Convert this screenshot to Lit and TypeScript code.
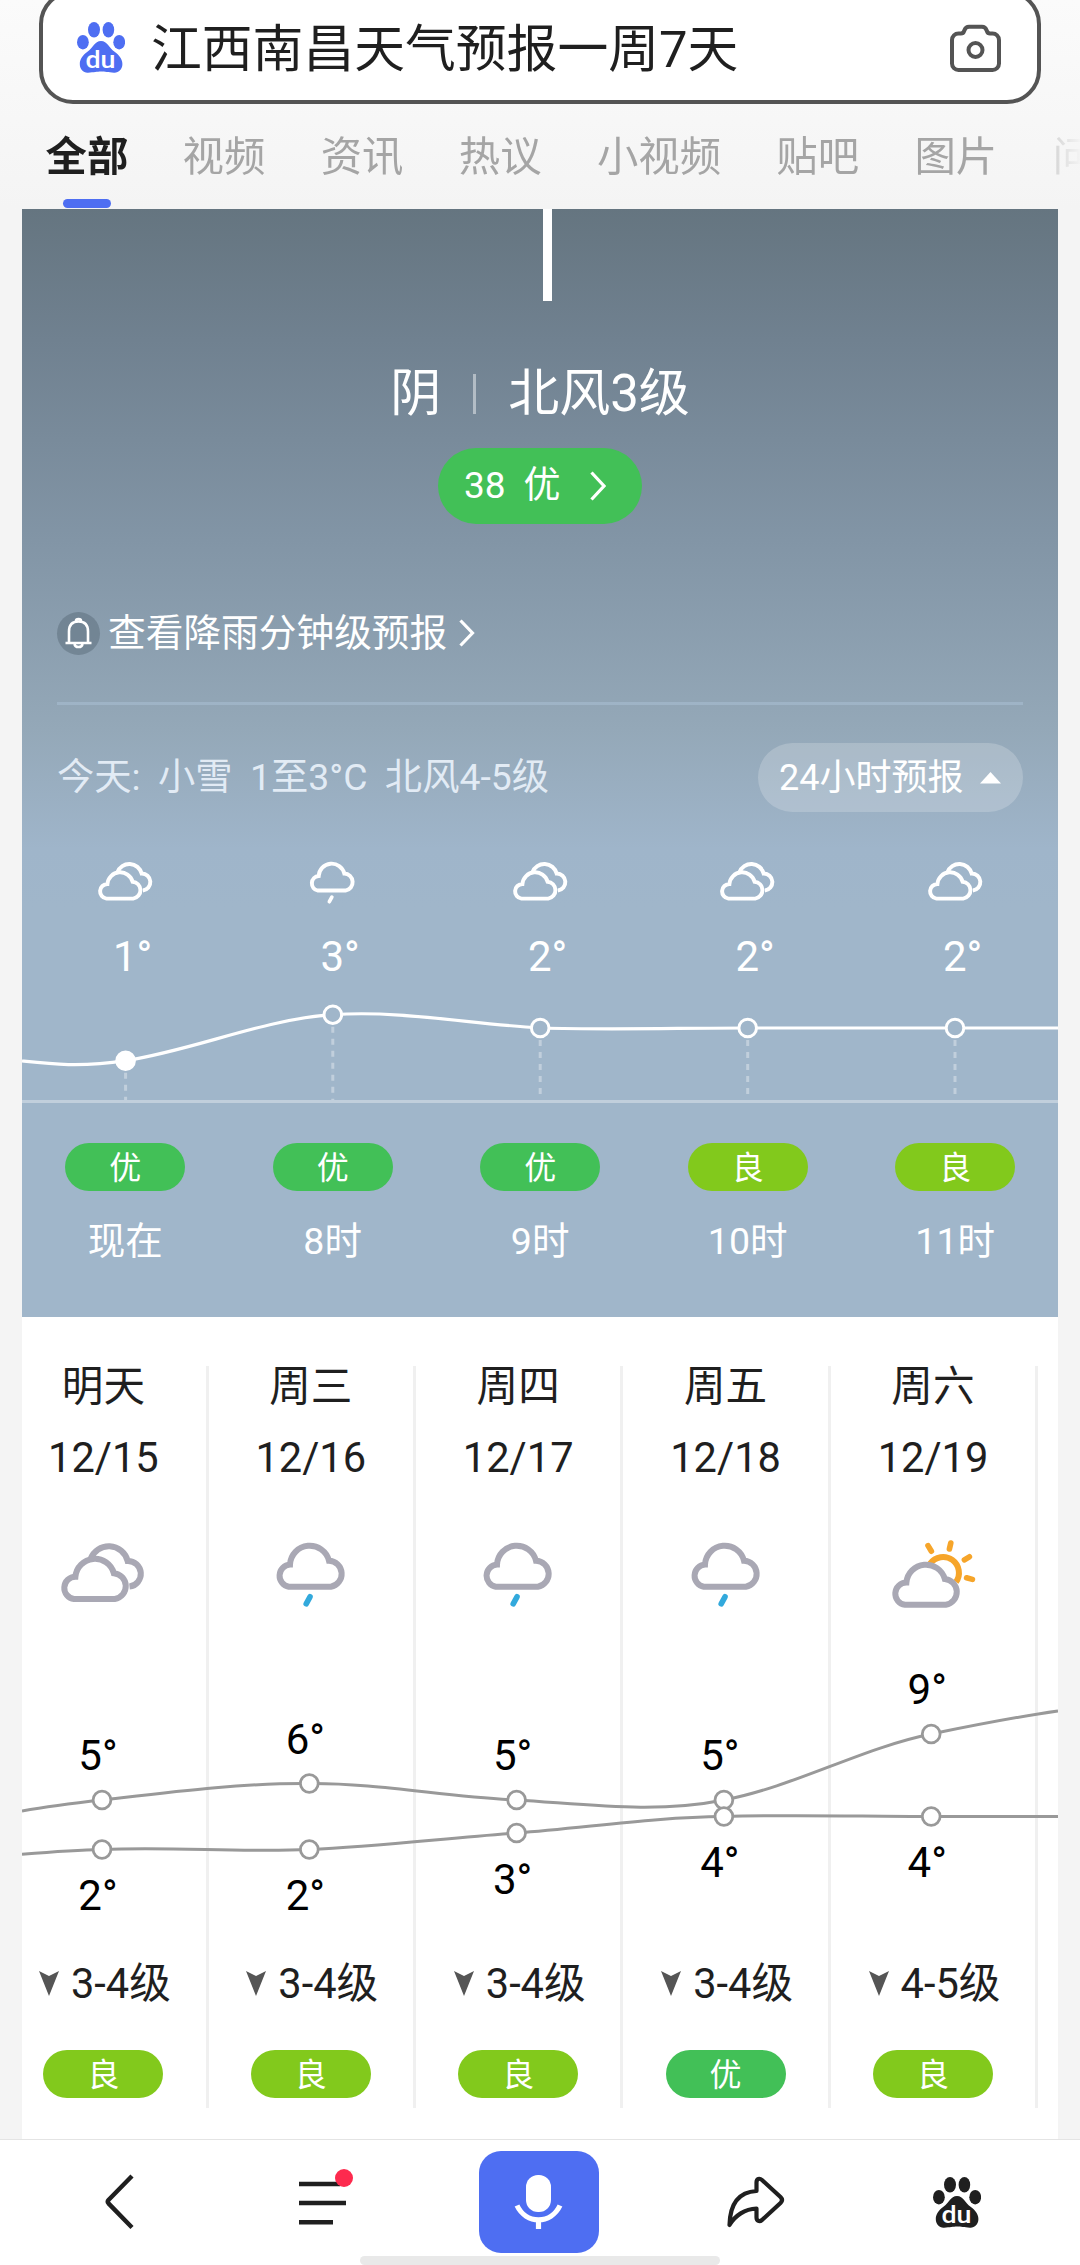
import { LitElement, html, css, svg, nothing } from "lit";
import { customElement, property } from "lit/decorators.js";

type Sky = "cloudy" | "rain" | "partly";
type Air = "优" | "良";

interface Hour { sky: Sky; temp: number; air: Air; label: string; y: number; }
interface Day { name: string; date: string; sky: Sky; high: number; low: number; wind: string; air: Air; }

const TABS = ["全部", "视频", "资讯", "热议", "小视频", "贴吧", "图片", "问"];

const HOURS: Hour[] = [
  { sky: "cloudy", temp: 1, air: "优", label: "现在", y: 1060.7 },
  { sky: "rain", temp: 3, air: "优", label: "8时", y: 1014.7 },
  { sky: "cloudy", temp: 2, air: "优", label: "9时", y: 1028 },
  { sky: "cloudy", temp: 2, air: "良", label: "10时", y: 1028 },
  { sky: "cloudy", temp: 2, air: "良", label: "11时", y: 1028 },
];

const DAYS: Day[] = [
  { name: "明天", date: "12/15", sky: "cloudy", high: 5, low: 2, wind: "3-4级", air: "良" },
  { name: "周三", date: "12/16", sky: "rain", high: 6, low: 2, wind: "3-4级", air: "良" },
  { name: "周四", date: "12/17", sky: "rain", high: 5, low: 3, wind: "3-4级", air: "良" },
  { name: "周五", date: "12/18", sky: "rain", high: 5, low: 4, wind: "3-4级", air: "优" },
  { name: "周六", date: "12/19", sky: "partly", high: 9, low: 4, wind: "4-5级", air: "良" },
];

const FRONT_CLOUD = "M19 71A11.2 11.2 0 0 1 20.4 48.7A19.6 19.6 0 0 1 58.8 45.2A13 13 0 0 1 59.8 71Z";

@customElement("sky-icon")
class SkyIcon extends LitElement {
  @property() sky: Sky = "cloudy";
  @property({ type: Boolean, reflect: true }) mono = false;

  static styles = css`
    :host { display: block; width: 96px; height: 96px; }
    svg { display: block; width: 100%; height: 100%; fill: none; stroke-width: 6; }
    .cloud { stroke: #a9a8b4; }
    .drop { stroke: #32a9dc; stroke-width: 5.6; stroke-linecap: round; }
    .sun { stroke: #f6a52a; }
    .ray { stroke: #f6a52a; stroke-width: 5.6; stroke-linecap: round; }
    :host([mono]) .cloud, :host([mono]) .drop { stroke: #fff; }
  `;

  render() {
    return html`<svg viewBox="0 0 96 96">
      ${this.sky === "cloudy" ? svg`
        <path class="cloud" d="M35.6 31A19.4 19.4 0 0 1 72.6 32.9A12.9 12.9 0 0 1 74.5 58.6"/>
        <path class="cloud" d=${FRONT_CLOUD}/>` : nothing}
      ${this.sky === "rain" ? svg`
        <path class="cloud" d="M25.8 58.8A11.2 11.2 0 0 1 27 36.6A19.8 19.8 0 0 1 66 32.8A13.1 13.1 0 0 1 67.8 58.8Z"/>
        <path class="drop" d="M47 68.8L43.2 75.8"/>` : nothing}
      ${this.sky === "partly" ? svg`
        <path class="sun" d="M45.2 35.6A15.7 15.7 0 0 1 71 54"/>
        <path class="ray" d="M43 17.6L46.4 23.2M65.8 15L64.4 21M84.4 28.8L79.4 31.8M81.6 49.8L87.4 51.4"/>
        <path class="cloud" transform="translate(1 5.8)" d=${FRONT_CLOUD}/>` : nothing}
    </svg>`;
  }
}

@customElement("air-badge")
class AirBadge extends LitElement {
  @property() level: Air = "优";

  static styles = css`
    :host { display: block; }
    .badge {
      width: 120px; height: 48px; border-radius: 24px; color: #fff;
      font-size: 32px; line-height: 50px; text-align: center;
    }
    .good { background: #42c057; }
    .fair { background: #82c91c; }
  `;

  render() {
    return html`<div class="badge ${this.level === "优" ? "good" : "fair"}">${this.level}</div>`;
  }
}

@customElement("paw-logo")
class PawLogo extends LitElement {
  static styles = css`
    :host { display: block; width: 48px; height: 51px; color: #1f1f1f; }
    svg { display: block; fill: currentColor; }
    .du { fill: #fff; font: 500 24.5px Roboto, "Liberation Sans", sans-serif; }
  `;

  render() {
    return html`<svg width="48" height="51" viewBox="0 0 48 51">
      <ellipse cx="5.9" cy="20.2" rx="5.9" ry="7.3"/>
      <ellipse cx="17" cy="7.8" rx="6" ry="7.7"/>
      <ellipse cx="31.4" cy="7.8" rx="5.8" ry="7.7"/>
      <ellipse cx="42.2" cy="20.2" rx="5.9" ry="7.3"/>
      <path d="M24 19C30.5 19 32 26 37.6 29.8C42 33 45.4 37 45.4 42C45.4 47.5 41.5 51 37 50.7C31 50.3 28 49.5 24 49.5C20 49.5 17 50.3 11 50.7C6.5 51 2.8 47.5 2.8 42C2.8 37 6 33 10.4 29.8C16 26 17.5 19 24 19Z"/>
      <text class="du" x="8.4" y="46" textLength="30" lengthAdjust="spacingAndGlyphs">du</text>
    </svg>`;
  }
}

@customElement("app-root")
class AppRoot extends LitElement {
  static styles = css`
    :host {
      display: block; width: 1080px; height: 2265px; overflow: hidden; background: #f4f4f4;
      font-family: Roboto, "Noto Sans CJK SC", sans-serif; color: #1f1f1f; white-space: nowrap;
    }
    .page { display: flex; flex-direction: column; height: 2265px; }

    .header { height: 209px; background: linear-gradient(#fbfbfb, #f4f4f4); }
    .search {
      box-sizing: border-box; width: 1002px; height: 114px; margin: -10px 0 0 39px;
      border: 4px solid #545454; border-radius: 34px; background: #fff;
      display: flex; align-items: center; padding: 0 34px;
    }
    .search paw-logo { color: #4e6ef2; }
    .query { flex: 1; margin-left: 26px; padding-top: 5px; font-size: 50.8px; line-height: 60px; }
    .camera { fill: none; stroke: #545454; stroke-width: 4; margin-top: 1px; }
    .tabs {
      display: flex; gap: 55.3px; height: 105px; padding-left: 45.5px; overflow: hidden;
      -webkit-mask-image: linear-gradient(to right, #000 1010px, transparent 1082px);
      mask-image: linear-gradient(to right, #000 1010px, transparent 1082px);
    }
    .tab {
      flex: none; display: flex; flex-direction: column; align-items: center; padding-top: 28px;
      font-size: 41.4px; line-height: 50px; color: #a5a5a5;
    }
    .tab:not(.active) { position: relative; left: -1px; }
    .tab.active { color: #1f1f1f; font-weight: 600; }
    .tab.active::after {
      content: ""; width: 48px; height: 9px; margin-top: 17px; border-radius: 5px; background: #4e6ef2;
    }

    .now {
      height: 1108px; margin: 0 22px; color: #fff;
      display: flex; flex-direction: column;
      background: linear-gradient(#657580 0, #708190 131px, #8295a6 331px, #94a8b8 520px, #9fb5ca 640px, #a0b6ca 700px);
    }
    .figure { height: 92px; display: flex; padding-left: 521px; }
    .stem { width: 9px; background: #fff; }
    .condition {
      display: flex; align-items: center; justify-content: center;
      height: 60px; margin-top: 63px; font-size: 51px; line-height: 60px;
    }
    .bar { width: 3px; height: 40px; margin: 0 32px 0 32px; background: rgba(255, 255, 255, 0.45); }
    .aqi {
      align-self: center; display: flex; align-items: center; box-sizing: border-box;
      width: 204px; height: 76px; margin-top: 24px; padding-left: 26px; border-radius: 38px;
      background: #42c057; font-size: 37px; line-height: 44px; gap: 18px;
    }
    .aqi svg { margin-left: 11px; }
    .stroke { fill: none; stroke: currentColor; stroke-width: 3.2; }
    .alert { display: flex; align-items: center; height: 44px; margin: 87px 35px 0; font-size: 37.7px; line-height: 44px; }
    .bell {
      width: 43px; height: 43px; margin-right: 8px; border-radius: 50%;
      background: rgba(90, 108, 122, 0.5); fill: none; stroke: #fff; stroke-width: 2.6;
    }
    .alert .chev { margin-left: 11px; }
    .rule { height: 3px; margin: 47px 35px 0; background: rgba(170, 192, 212, 0.55); }
    .today { display: flex; align-items: center; height: 69px; margin: 38px 35px 0; font-size: 37.3px; line-height: 44px; }
    .today-text { flex: 1; display: flex; gap: 17.4px; padding-bottom: 2px; color: rgba(240, 247, 255, 0.85); }
    .toggle {
      display: flex; align-items: center; box-sizing: border-box; width: 265px; height: 69px;
      padding-left: 21px; border-radius: 34.5px; background: rgba(255, 255, 255, 0.2);
      font-size: 36px; gap: 17px;
    }
    .hours { display: grid; grid-template-columns: repeat(5, 207.5px); justify-items: center; margin-left: -0.6px; }
    .sky-row { margin-top: 40px; }
    .sky-row sky-icon { width: 63px; height: 63px; }
    .temp-row { margin-top: 17px; font-size: 42px; line-height: 50px; }
    .temp { padding-left: 15px; }
    .chart { display: block; }
    .now .chart { margin-top: -1px; }
    .label-row { margin-top: 25px; font-size: 37.5px; line-height: 50px; }

    .week { height: 822px; margin: 0 22px; background: #fff; display: grid; align-items: start; overflow: hidden; }
    .strip { grid-area: 1 / 1; display: flex; height: 742px; margin: 49px 0 0 -20.8px; }
    .day {
      flex: none; box-sizing: border-box; width: 207.4px; border-right: 3px solid #f0f0f0;
      display: flex; flex-direction: column; align-items: center; font-size: 41.6px; line-height: 42px;
    }
    .date { margin-top: 29px; }
    .day sky-icon { margin-top: 49px; }
    .wind { display: flex; gap: 12px; height: 50px; margin-top: 334px; padding-left: 3px; align-items: center; }
    .wind span { padding-top: 2px; }
    .wind svg { fill: #555; margin-top: 1px; }
    .day air-badge { margin-top: 42px; }
    .week .chart { grid-area: 1 / 1; margin-top: 307px; }
    .reading { font: 42px Roboto, sans-serif; fill: #000; text-anchor: middle; }

    .dock {
      position: relative; box-sizing: border-box; height: 126px; border-top: 1px solid #e4e4e4; background: #fff;
      display: grid; grid-template-columns: 238px 176px 250px 182px 222px; justify-items: center;
      align-items: start; color: #1f1f1f;
    }
    .dock > * { display: block; }
    .back { margin-top: 34px; }
    .menu { margin-top: 28px; }
    .mic { margin-top: 11px; width: 120px; height: 102px; border-radius: 22px; background: #4e6ef2; }
    .share { margin-top: 34px; }
    .dock paw-logo { margin-top: 37px; }
    .dock .home { position: absolute; left: 360px; bottom: 0; width: 360px; height: 9px; border-radius: 5px; background: #e9e9e9; }
  `;

  private hourChart() {
    const xs = [125.6, 332.8, 540.2, 747.7, 955];
    return html`<svg class="chart" width="1036" height="162" viewBox="22 981 1036 162">
      <path d="M22 1101.5H1058" stroke="#fff" stroke-opacity=".35" stroke-width="3"/>
      <path d="M22 1061C50 1064 80 1067.5 125.6 1060.7C195 1050 264 1019 332.8 1014.7C401 1010 470 1024 540.2 1028C609 1030 678 1028 747.7 1028H1058"
        fill="none" stroke="#fff" stroke-width="3.2"/>
      ${HOURS.map((h, i) => svg`
        <path d="M${xs[i]} ${h.y + 12}V1100" stroke="#fff" stroke-opacity=".35" stroke-width="3" stroke-dasharray="6 6"/>
        <circle cx=${xs[i]} cy=${h.y} r="8.8" fill=${i === 0 ? "#fff" : "#a0b6ca"} stroke="#fff" stroke-width="3"/>`)}
    </svg>`;
  }

  private weekChart() {
    const x = (i: number) => 102 + i * 207.3;
    const y = (t: number) => 1882.5 - t * 16.5;
    const dot = (cx: number, cy: number) =>
      svg`<circle cx=${cx} cy=${cy} r="8.9" fill="#fff" stroke="#999" stroke-width="2.8"/>`;
    return html`<svg class="chart" width="1036" height="334" viewBox="22 1624 1036 334">
      <g fill="none" stroke="#999" stroke-width="3">
        <path d="M22 1811C50 1806 75 1803 102 1800C171 1792 240 1783 309.3 1783.5C378 1783 447 1797 516.6 1800C585 1804 655 1814 723.9 1800C793 1787 862 1748 931.2 1734C975 1725 1015 1717 1058 1711"/>
        <path d="M22 1854.3C50 1852 75 1850 102 1849.5C171 1846.5 240 1852.5 309.3 1849.5C378 1846.5 447 1838 516.6 1833C585 1828 655 1817 723.9 1816.5C793 1814.5 862 1816.5 931.2 1816.5H1058"/>
      </g>
      ${DAYS.map((d, i) => svg`
        ${dot(x(i), y(d.high))}
        ${dot(x(i), y(d.low))}
        <text class="reading" x=${x(i) - 4} y=${y(d.high) - 30}>${d.high}°</text>
        <text class="reading" x=${x(i) - 4} y=${y(d.low) + 60.5}>${d.low}°</text>`)}
    </svg>`;
  }

  render() {
    return html`<div class="page">
      <div class="header">
        <div class="search">
          <paw-logo></paw-logo>
          <div class="query">江西南昌天气预报一周7天</div>
          <svg class="camera" width="55" height="52" viewBox="0 0 55 52">
            <path d="M10.5 11.5H13C15.5 11.5 15.6 10.5 16.3 8.5C17.3 5.8 18.5 4.8 21 4.8H34C36.5 4.8 37.7 5.8 38.7 8.5C39.4 10.5 39.5 11.5 42 11.5H44.5A6.5 6.5 0 0 1 51 18V41.5A6.5 6.5 0 0 1 44.5 48H10.5A6.5 6.5 0 0 1 4 41.5V18A6.5 6.5 0 0 1 10.5 11.5Z"/>
            <circle cx="27.5" cy="28" r="7"/>
          </svg>
        </div>
        <div class="tabs">${TABS.map((t, i) => html`<div class="tab ${i === 0 ? "active" : ""}">${t}</div>`)}</div>
      </div>

      <div class="now">
        <div class="figure"><div class="stem"></div></div>
        <div class="condition"><span>阴</span><div class="bar"></div><span>北风3级</span></div>
        <div class="aqi">
          <span>38</span><span>优</span>
          <svg class="stroke" width="16" height="30" viewBox="0 0 16 30"><path d="M1.5 1.5L14 15L1.5 28.5"/></svg>
        </div>
        <div class="alert">
          <svg class="bell" viewBox="0 0 43 43">
            <path d="M8.500 31H34.500M12 31V19.500C12 12.500 16 9.500 21.500 9.500S31 12.500 31 19.500V31"/>
            <path d="M19 9C19 6.500 24 6.500 24 9"/>
            <path d="M17.500 32C18 36 25 36 25.500 32"/>
          </svg>
          <span>查看降雨分钟级预报</span>
          <svg class="stroke chev" width="18" height="30" viewBox="0 0 18 30"><path d="M2.500 2.500L14.500 15L2.500 27.500"/></svg>
        </div>
        <div class="rule"></div>
        <div class="today">
          <div class="today-text"><span>今天:</span><span>小雪</span><span>1至3°C</span><span>北风4-5级</span></div>
          <div class="toggle">
            <span>24小时预报</span>
            <svg width="21" height="12" viewBox="0 0 21 12" fill="#fff"><path d="M10.500 0L21 11.500H0Z"/></svg>
          </div>
        </div>
        <div class="hours sky-row">${HOURS.map((h) => html`<sky-icon mono .sky=${h.sky}></sky-icon>`)}</div>
        <div class="hours temp-row">${HOURS.map((h) => html`<span class="temp">${h.temp}°</span>`)}</div>
        ${this.hourChart()}
        <div class="hours">${HOURS.map((h) => html`<air-badge .level=${h.air}></air-badge>`)}</div>
        <div class="hours label-row">${HOURS.map((h) => html`<span>${h.label}</span>`)}</div>
      </div>

      <div class="week">
        <div class="strip">
          ${DAYS.map((d) => html`<div class="day">
            <div>${d.name}</div>
            <div class="date">${d.date}</div>
            <sky-icon .sky=${d.sky}></sky-icon>
            <div class="wind">
              <svg width="20" height="25" viewBox="0 0 20 25"><path d="M0 0L10 5L20 0L10 25Z"/></svg>
              <span>${d.wind}</span>
            </div>
            <air-badge .level=${d.air}></air-badge>
          </div>`)}
        </div>
        ${this.weekChart()}
      </div>

      <div class="dock">
        <svg class="back" width="30" height="56" viewBox="0 0 30 56" fill="none" stroke="#1f1f1f" stroke-width="4.4">
          <path d="M28 2L4.5 26Q3 27.7 4.5 29.4L28 53.5"/>
        </svg>
        <svg class="menu" width="56" height="60" viewBox="0 0 56 60">
          <path d="M1 16H42M1 35H48M1 54.2H35" stroke="#1f1f1f" stroke-width="4.5"/>
          <circle cx="46" cy="10" r="9" fill="#fd2a4e"/>
        </svg>
        <svg class="mic" viewBox="0 0 120 102">
          <rect x="47" y="24" width="25" height="37" rx="12" fill="#fff"/>
          <path d="M38 54.500C47 73.500 72 73.500 81 54.500M59.500 68V78" fill="none" stroke="#fff" stroke-width="5.2"/>
        </svg>
        <svg class="share" width="60" height="56" viewBox="0 0 60 56" fill="none" stroke="#1f1f1f" stroke-width="4.2" stroke-linejoin="round">
          <path d="M4.500 51C5 30 14 18 31.500 17V8.500C31.500 4.500 34.500 3.800 37 6L55.500 23C57.500 25 57.500 27 55.500 29L37 46C34.500 48 31.500 47 31.500 43.500V34.500C20 35 10 41.500 4.500 51Z"/>
        </svg>
        <paw-logo></paw-logo>
        <div class="home"></div>
      </div>
    </div>`;
  }
}
